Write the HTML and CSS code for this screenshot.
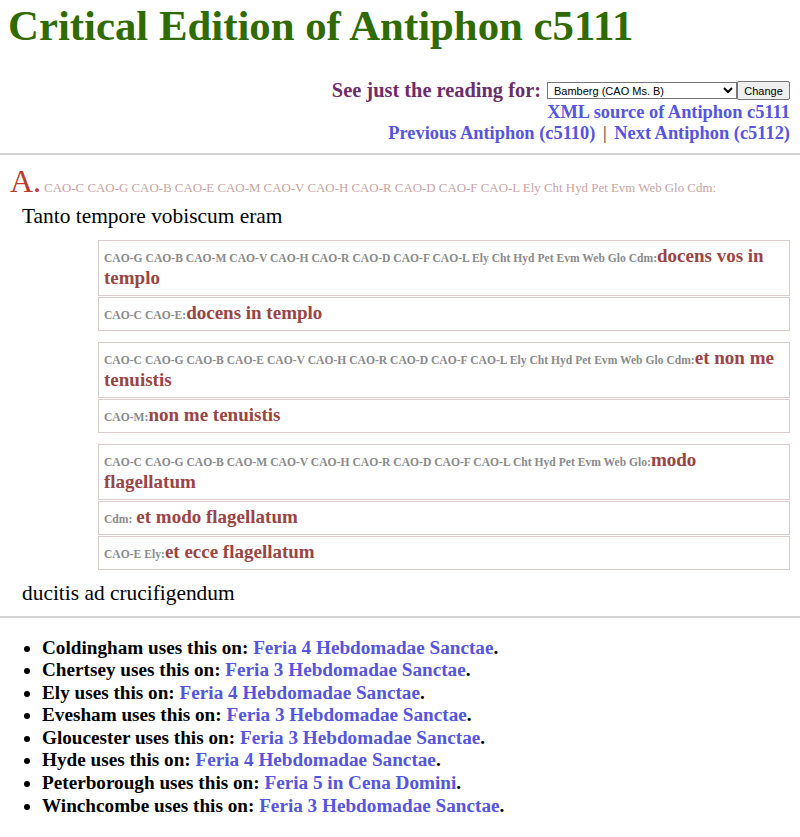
FILE: index.html
```html
<!DOCTYPE html>
<html>
<head>
<meta charset="utf-8">
<title>Critical Edition of Antiphon c5111</title>
<link rel="stylesheet" href="styles.css">
</head>
<body>
<h1 class="title">Critical Edition of Antiphon c5111</h1>
<div class="nav">
  <form class="pick">
    <span class="pick-label">See just the reading for:</span>
    <select class="pick-select">
      <option>Bamberg (CAO Ms. B)</option>
    </select><button type="button" class="pick-btn">Change</button>
  </form>
  <div class="nav-line"><a href="#">XML source of Antiphon c5111</a></div>
  <div class="nav-line"><a href="#">Previous Antiphon (c5110)</a> <span class="sep">|</span> <a href="#">Next Antiphon (c5112)</a></div>
</div>
<hr class="rule">
<div class="text">
  <div class="section-head"><span class="letter">A.</span><span class="sigla-head">CAO-C CAO-G CAO-B CAO-E CAO-M CAO-V CAO-H CAO-R CAO-D CAO-F CAO-L Ely Cht Hyd Pet Evm Web Glo Cdm:</span></div>
  <div class="line line-first">Tanto tempore vobiscum eram</div>
  <div class="group">
    <div class="var"><span class="sig">CAO-G CAO-B CAO-M CAO-V CAO-H CAO-R CAO-D CAO-F CAO-L Ely Cht Hyd Pet Evm Web Glo Cdm:</span><span class="rd">docens vos in templo</span></div>
    <div class="var"><span class="sig">CAO-C CAO-E:</span><span class="rd">docens in templo</span></div>
  </div>
  <div class="group">
    <div class="var"><span class="sig">CAO-C CAO-G CAO-B CAO-E CAO-V CAO-H CAO-R CAO-D CAO-F CAO-L Ely Cht Hyd Pet Evm Web Glo Cdm:</span><span class="rd">et non me tenuistis</span></div>
    <div class="var"><span class="sig">CAO-M:</span><span class="rd">non me tenuistis</span></div>
  </div>
  <div class="group">
    <div class="var"><span class="sig">CAO-C CAO-G CAO-B CAO-M CAO-V CAO-H CAO-R CAO-D CAO-F CAO-L Cht Hyd Pet Evm Web Glo:</span><span class="rd">modo flagellatum</span></div>
    <div class="var"><span class="sig">Cdm:</span> <span class="rd">et modo flagellatum</span></div>
    <div class="var"><span class="sig">CAO-E Ely:</span><span class="rd">et ecce flagellatum</span></div>
  </div>
  <div class="line line-last">ducitis ad crucifigendum</div>
</div>
<hr class="rule rule-2">
<ul class="uses">
  <li>Coldingham uses this on: <a href="#">Feria 4 Hebdomadae Sanctae</a>.</li>
  <li>Chertsey uses this on: <a href="#">Feria 3 Hebdomadae Sanctae</a>.</li>
  <li>Ely uses this on: <a href="#">Feria 4 Hebdomadae Sanctae</a>.</li>
  <li>Evesham uses this on: <a href="#">Feria 3 Hebdomadae Sanctae</a>.</li>
  <li>Gloucester uses this on: <a href="#">Feria 3 Hebdomadae Sanctae</a>.</li>
  <li>Hyde uses this on: <a href="#">Feria 4 Hebdomadae Sanctae</a>.</li>
  <li>Peterborough uses this on: <a href="#">Feria 5 in Cena Domini</a>.</li>
  <li>Winchcombe uses this on: <a href="#">Feria 3 Hebdomadae Sanctae</a>.</li>
</ul>
</body>
</html>
```
FILE: styles.css
```css
body {
  margin: 0;
  padding: 0 10px 0 8px;
  font-family: "Liberation Serif", "Times New Roman", serif;
  color: #000;
  background: #fff;
}
.title {
  font-size: 42.8px;
  font-weight: bold;
  color: #2f6b00;
  margin: 0;
  padding: 2px 0 0 0;
  line-height: 48px;
}
.nav {
  text-align: right;
  margin-top: 30px;
  font-weight: bold;
  font-size: 18.4px;
  line-height: 21.5px;
}
.pick {
  margin: 0;
  display: flex;
  justify-content: flex-end;
  align-items: center;
}
.pick-label {
  color: #6b2d6b;
  font-size: 20.4px;
  margin-right: 6px;
}
.pick-select {
  font-family: Arial, "Liberation Sans", sans-serif;
  font-size: 11px;
  width: 190px;
  height: 17px;
  padding: 0 2px;
  border: 1px solid #767676;
  border-radius: 0;
  background: #fff;
  margin: 0;
}
.pick-btn {
  font-family: Arial, "Liberation Sans", sans-serif;
  font-size: 11px;
  height: 19px;
  padding: 0 6px;
  margin: 0;
  border: 1px solid #767676;
  border-radius: 2px;
  background: #efefef;
  width: 53px;
}
.nav-line a {
  color: #5555dd;
  text-decoration: none;
}
.sep {
  color: #333;
  font-weight: normal;
  margin: 0 3px;
}
.rule {
  border: 0;
  border-top: 2px solid #d3d3d3;
  margin: 8px -10px 0 -8px;
  height: 0;
}
.text {
  padding-left: 2px;
}
.section-head {
  margin-top: 10px;
  font-size: 32px;
  line-height: 32px;
}
.letter {
  color: #c0392b;
  font-size: 32px;
  line-height: 1;
}
.sigla-head {
  color: #c9a3a3;
  font-size: 12.9px;
  line-height: 1;
  margin-left: 3px;
}
.line {
  font-size: 21.4px;
  padding-left: 12px;
  line-height: 24px;
}
.line-first {
  margin: 7px 0 12px 0;
}
.group {
  margin: 0 0 11px 88px;
  display: flex;
  flex-direction: column;
  gap: 1px;
}
.line-last {
  margin: 11px 0 0 0;
}
.group + .line-last {
  margin-top: 0;
}
.var {
  border: 1px solid #dccccc;
  padding: 5px;
  font-size: 16px;
  line-height: 22px;
}
.sig {
  color: #8a8a8a;
  font-weight: bold;
  font-size: 11.6px;
  line-height: 12px;
}
.rd {
  color: #9a4444;
  font-weight: bold;
  font-size: 19px;
  line-height: 16px;
}
.rule-2 {
  margin-top: 11px;
}
.uses {
  margin: 19px 0 0 0;
  padding-left: 34px;
  font-weight: bold;
  font-size: 19.2px;
  line-height: 22.6px;
}
.uses a {
  color: #5555dd;
  text-decoration: none;
}
```
